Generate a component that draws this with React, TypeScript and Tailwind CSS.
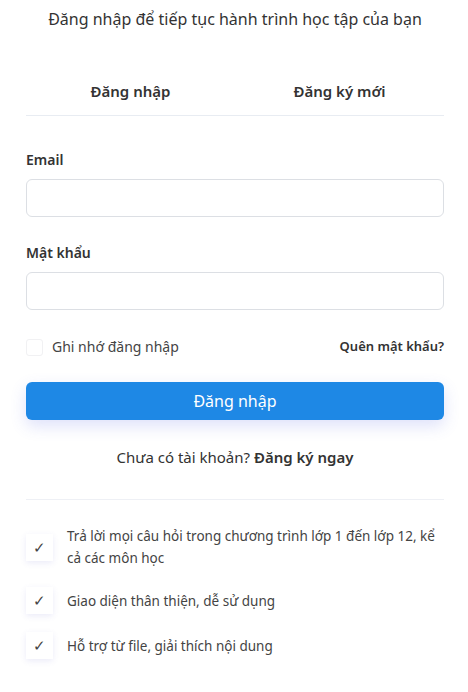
import { useState } from "react";

const features = [
  "Trả lời mọi câu hỏi trong chương trình lớp 1 đến lớp 12, kể cả các môn học",
  "Giao diện thân thiện, dễ sử dụng",
  "Hỗ trợ từ file, giải thích nội dung",
];

export default function App() {
  const [tab, setTab] = useState<"login" | "register">("login");

  return (
    <div
      className="min-h-[692px] bg-white pl-[26px] pr-[24px] text-[#333]"
      style={{ fontFamily: '"Noto Sans", "Open Sans", sans-serif' }}
    >
      <p className="pt-[8px] text-center text-[16px] leading-[22px] text-[#333]">
        Đăng nhập để tiếp tục hành trình học tập của bạn
      </p>

      <div className="mt-[50px] flex border-b border-[#e8ecf2] pb-[13px]">
        <button
          onClick={() => setTab("login")}
          className="flex-1 text-center text-[15px] font-semibold leading-[22px] text-[#333]"
        >
          Đăng nhập
        </button>
        <button
          onClick={() => setTab("register")}
          className="flex-1 text-center text-[15px] font-semibold leading-[22px] text-[#333]"
        >
          Đăng ký mới
        </button>
      </div>

      <form className="pt-[34px]" onSubmit={(e) => e.preventDefault()} data-tab={tab}>
        <label className="block text-[14px] font-semibold leading-[20px] text-[#333]">Email</label>
        <input
          type="email"
          className="mt-[9px] block h-[38px] w-full rounded-[6px] border border-[#dcdfe4] bg-white px-3 text-[14px] outline-none"
        />

        <label className="mt-[26px] block text-[14px] font-semibold leading-[20px] text-[#333]">
          Mật khẩu
        </label>
        <input
          type="password"
          className="mt-[9px] block h-[38px] w-full rounded-[6px] border border-[#dcdfe4] bg-white px-3 text-[14px] outline-none"
        />

        <div className="mt-[27px] flex items-center justify-between">
          <label className="flex items-center gap-[9px] text-[14px] leading-[20px] text-[#444]">
            <span className="h-[17px] w-[17px] rounded-[3px] border border-[#f1f1f3] bg-white" />
            Ghi nhớ đăng nhập
          </label>
          <a className="text-[13px] font-semibold text-[#333]">Quên mật khẩu?</a>
        </div>

        <button
          type="submit"
          className="mt-[25px] block h-[38px] w-full rounded-[6px] bg-[#1e88e5] text-[16px] text-white shadow-[0_6px_16px_rgba(70,90,230,0.18)]"
        >
          Đăng nhập
        </button>

        <p className="mt-[26px] text-center text-[15px] leading-[22px] text-[#333]">
          Chưa có tài khoản? <span className="font-semibold">Đăng ký ngay</span>
        </p>
      </form>

      <div className="mt-[31px] border-t border-[#eef0f5] pt-[25px]">
        <ul className="flex flex-col gap-[18px]">
          {features.map((f) => (
            <li key={f} className="flex items-center gap-[14px]">
              <span className="flex h-[27px] w-[27px] items-center justify-center bg-white text-[15px] text-[#444] shadow-[0_2px_6px_rgba(90,90,200,0.12)]">
                ✓
              </span>
              <span className="flex-1 text-[13.5px] leading-[22px] text-[#444]">{f}</span>
            </li>
          ))}
        </ul>
      </div>
    </div>
  );
}
